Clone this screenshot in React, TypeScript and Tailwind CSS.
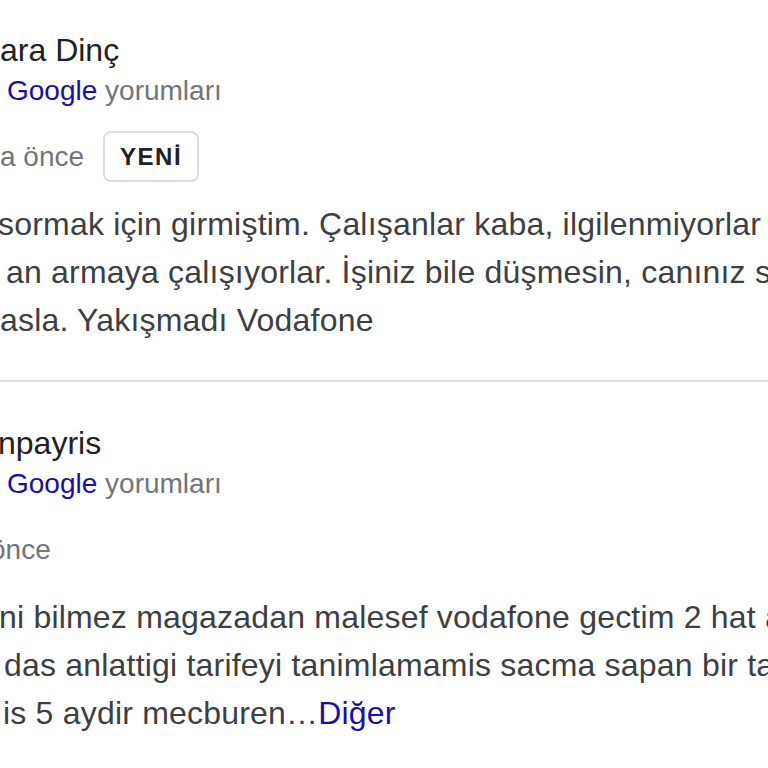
import React from "react";

const Line = ({ className = "", children }: { className?: string; children: React.ReactNode }) => (
  <div className={`whitespace-nowrap ${className}`}>{children}</div>
);

export default function App() {
  return (
    <div className="w-[768px] h-[768px] overflow-hidden bg-white font-['Liberation_Sans',Arial,sans-serif]">
      {/* Review 1 */}
      <div className="pt-[30px]">
        <Line className="text-[32px] leading-[40px] text-[#202124]">ara Dinç</Line>
        <Line className="mt-[1px] text-[28px] leading-[40px] text-[#70757a] pl-[7px]">
          <span className="text-[#1a0dab]">Google</span> yorumları
        </Line>
        <div className="mt-[20px] h-[51px] flex items-center whitespace-nowrap">
          <span className="text-[28px] text-[#70757a]">a önce</span>
          <span className="ml-[19px] h-[51px] flex items-center rounded-[8px] border-2 border-[#dadce0] px-[15px] text-[24px] font-bold tracking-[1.5px] text-[#202124]">
            YENİ
          </span>
        </div>
        <div className="mt-[18px] text-[32px] leading-[48px] tracking-[0.2px] text-[#3c4043]">
          <Line className="ml-[-2px]">sormak için girmiştim. Çalışanlar kaba, ilgilenmiyorlar ve</Line>
          <Line className="ml-[6px]">an armaya çalışıyorlar. İşiniz bile düşmesin, canınız sıkılır</Line>
          <Line>asla. Yakışmadı Vodafone</Line>
        </div>
      </div>

      <div className="mt-[36px] h-[2px] bg-[#dadce0]" />

      {/* Review 2 */}
      <div className="pt-[41px]">
        <Line className="ml-[-2px] text-[32px] leading-[40px] text-[#202124]">npayris</Line>
        <Line className="mt-[1px] text-[28px] leading-[40px] text-[#70757a] pl-[7px]">
          <span className="text-[#1a0dab]">Google</span> yorumları
        </Line>
        <div className="mt-[20px] h-[51px] flex items-center whitespace-nowrap">
          <span className="ml-[-10px] text-[28px] text-[#70757a]">önce</span>
        </div>
        <div className="mt-[18px] text-[32px] leading-[48px] tracking-[0.2px] text-[#3c4043]">
          <Line className="ml-[-1px]">ni bilmez magazadan malesef vodafone gectim 2 hat aldim</Line>
          <Line className="ml-[4px]">das anlattigi tarifeyi tanimlamamis sacma sapan bir tarife</Line>
          <Line className="ml-[3px]">
            is 5 aydir mecburen…<span className="text-[#1a0dab]">Diğer</span>
          </Line>
        </div>
      </div>
    </div>
  );
}
